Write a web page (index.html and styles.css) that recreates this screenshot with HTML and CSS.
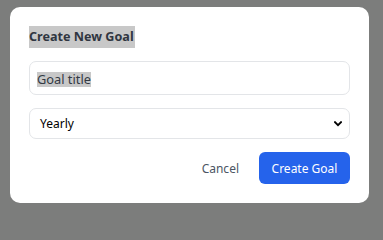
FILE: index.html
```html
<!DOCTYPE html>
<html lang="en">
<head>
<meta charset="utf-8">
<title>Create New Goal</title>
<link rel="stylesheet" href="styles.css">
</head>
<body>
<div class="overlay">
  <div class="modal">
    <h2 class="title"><span class="sel">Create New Goal</span></h2>
    <div class="field input"><span class="sel placeholder">Goal title</span></div>
    <div class="field select">
      <span class="value">Yearly</span>
      <svg class="chev" width="8" height="6" viewBox="0 0 8 6"><path d="M1 1.2 L4 4.2 L7 1.2" fill="none" stroke="#000" stroke-width="1.9" stroke-linecap="square"/></svg>
    </div>
    <div class="actions">
      <button class="btn cancel">Cancel</button>
      <button class="btn primary">Create Goal</button>
    </div>
  </div>
</div>
</body>
</html>
```

FILE: styles.css
```css
html, body {
  margin: 0;
  padding: 0;
  background: #7c7d7c;
  width: 383px;
  height: 215px;
  overflow: hidden;
}

.overlay {
  padding: 7px 0 0 10px;
}

.modal {
  box-sizing: border-box;
  width: 359px;
  background: #ffffff;
  border-radius: 10px;
  padding: 19px 19px 19px 19px;
  font-family: "Noto Sans", "Open Sans", sans-serif;
  display: flex;
  flex-direction: column;
}

.title {
  margin: 0 0 13px 0;
  font-size: 12.6px;
  line-height: 22px;
  font-weight: 700;
  color: #303641;
  display: flex;
}

.sel {
  background: #c8c8c8;
}

.title .sel {
  display: inline-block;
  line-height: 22px;
  padding-right: 1px;
}

.field {
  box-sizing: border-box;
  border: 1px solid #e3e5e8;
  border-radius: 7px;
  background: #fff;
  display: flex;
  align-items: center;
}

.input {
  height: 34px;
  padding: 2px 7px 0 7px;
  margin-bottom: 13px;
  font-size: 12.8px;
  color: #333a44;
}

.placeholder {
  line-height: 15px;
}

.select {
  height: 31px;
  padding: 0 7px 0 10px;
  justify-content: space-between;
  font-size: 12px;
  color: #000;
}

.chev {
  display: block;
}

.actions {
  margin-top: 13px;
  display: flex;
  justify-content: flex-end;
  gap: 7px;
}

.btn {
  font-family: "Noto Sans", "Open Sans", sans-serif;
  font-size: 12px;
  height: 32px;
  border: none;
  border-radius: 6px;
  padding: 0 13px;
  cursor: pointer;
}

.cancel {
  background: transparent;
  color: #4b5563;
}

.primary {
  background: #2563eb;
  color: #ffffff;
  width: 91px;
  padding: 0;
}
```
